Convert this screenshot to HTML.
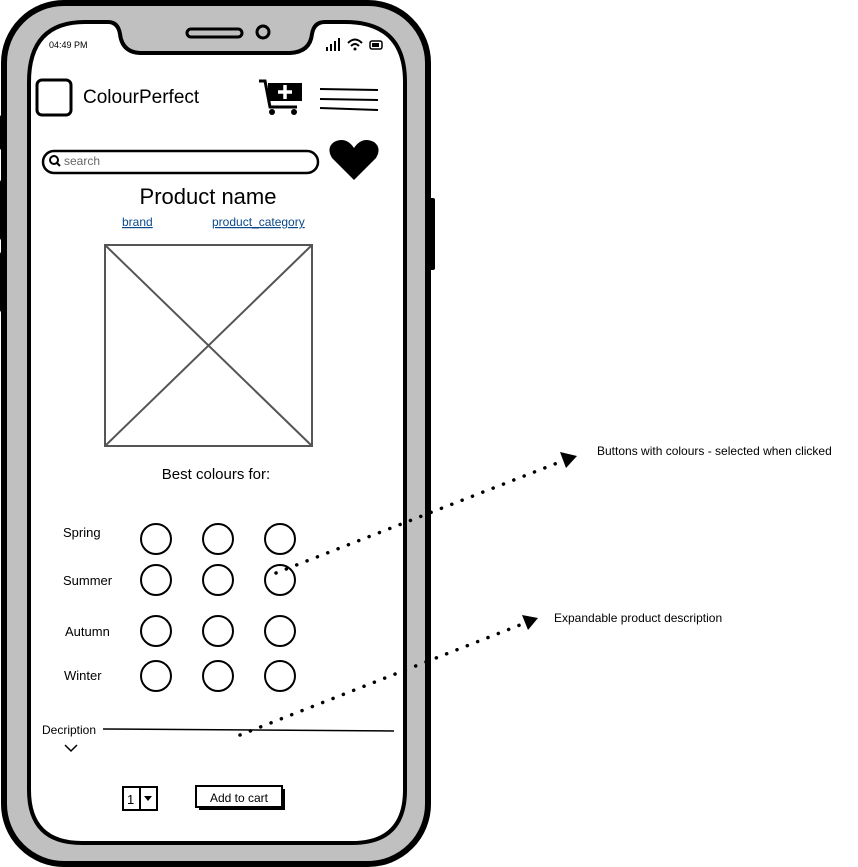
<!DOCTYPE html>
<html><head><style>body{margin:0;background:#fff}svg{display:block}text{font-family:"Liberation Sans",sans-serif}</style></head><body>
<svg width="858" height="867" viewBox="0 0 858 867" xmlns="http://www.w3.org/2000/svg">
<rect x="0" y="115" width="6" height="35" rx="2" fill="#000"/>
<rect x="0" y="180" width="6" height="60" rx="2" fill="#000"/>
<rect x="0" y="252" width="6" height="60" rx="2" fill="#000"/>
<rect x="428" y="198" width="7" height="72" rx="2" fill="#000"/>
<rect x="4" y="3" width="424" height="861" rx="60" fill="#c0c0c0" stroke="#000" stroke-width="6"/>
<path d="M85 22 H108 Q118 22 120 34 Q122 52 140 53 H290 Q310 52 312 34 Q314 22 325 22 H345 Q405 22 405 82 V790 Q405 843 352 843 H82 Q29 843 29 790 V82 Q29 22 85 22 Z" fill="#fff" stroke="#000" stroke-width="4"/>
<rect x="187" y="29" width="55" height="8" rx="4" fill="none" stroke="#000" stroke-width="3"/>
<circle cx="263" cy="32" r="6" fill="none" stroke="#000" stroke-width="3"/>
<text x="49" y="48" font-size="9">04:49 PM</text>
<g fill="#000"><rect x="326" y="47" width="2" height="4"/><rect x="330" y="44" width="2" height="7"/><rect x="334" y="41" width="2" height="10"/><rect x="338" y="38" width="2" height="13"/></g>
<path d="M348 43 Q355 36 362 43 M351 46 Q355 42 359 46" fill="none" stroke="#000" stroke-width="2"/><circle cx="355" cy="49" r="1.5"/>
<rect x="370" y="41" width="12" height="8" rx="2" fill="none" stroke="#000" stroke-width="1.5"/><rect x="372" y="43" width="7" height="4"/>
<rect x="37" y="80" width="34" height="35" rx="5" fill="none" stroke="#000" stroke-width="3"/>
<text x="83" y="103" font-size="19">ColourPerfect</text>
<path d="M259 81 H265 L270 107 H297" fill="none" stroke="#000" stroke-width="3"/>
<rect x="268" y="83" width="34" height="18" fill="#000"/>
<path d="M285 85 V99 M278 92 H292" stroke="#fff" stroke-width="3.5"/>
<circle cx="272" cy="112" r="3"/><circle cx="294" cy="112" r="3"/>
<path d="M320 89 L378 90 M320 99 L378 100 M320 108 L378 110" stroke="#000" stroke-width="2"/>
<rect x="43" y="151" width="275" height="22" rx="11" fill="none" stroke="#000" stroke-width="2.5"/>
<circle cx="54" cy="160" r="4" fill="none" stroke="#000" stroke-width="2"/><path d="M57 163 L60 166" stroke="#000" stroke-width="2"/>
<text x="64" y="165" font-size="12" fill="#666">search</text>
<path d="M354 180 L332 158 Q326 148 334 142 Q346 136 354 148 Q362 136 374 142 Q382 148 376 158 Z" fill="#000"/>
<text x="208" y="204" font-size="22" text-anchor="middle">Product name</text>
<text x="122" y="226" font-size="12" fill="#0a4a8a" text-decoration="underline">brand</text>
<text x="212" y="226" font-size="12" fill="#0a4a8a" text-decoration="underline">product_category</text>
<rect x="105" y="245" width="207" height="201" fill="none" stroke="#555" stroke-width="2"/>
<path d="M105 245 L312 446 M312 245 L105 446" stroke="#555" stroke-width="2"/>
<text x="216" y="479" font-size="15" text-anchor="middle">Best colours for:</text>
<g font-size="13"><text x="63" y="537">Spring</text><text x="63" y="585">Summer</text><text x="65" y="636">Autumn</text><text x="64" y="680">Winter</text></g>
<g fill="none" stroke="#000" stroke-width="2">
<circle cx="156" cy="539" r="15"/><circle cx="218" cy="539" r="15"/><circle cx="280" cy="539" r="15"/>
<circle cx="156" cy="580" r="15"/><circle cx="218" cy="580" r="15"/><circle cx="280" cy="580" r="15"/>
<circle cx="156" cy="631" r="15"/><circle cx="218" cy="631" r="15"/><circle cx="280" cy="631" r="15"/>
<circle cx="156" cy="676" r="15"/><circle cx="218" cy="676" r="15"/><circle cx="280" cy="676" r="15"/>
</g>
<path d="M276 573 L565 460" stroke="#000" stroke-width="3.5" stroke-dasharray="0.1 11" stroke-linecap="round"/>
<path d="M560 452 L577 456 L566 468 Z" fill="#000"/>
<text x="597" y="455" font-size="12">Buttons with colours - selected when clicked</text>
<path d="M240 735 L525 623" stroke="#000" stroke-width="3.5" stroke-dasharray="0.1 11" stroke-linecap="round"/>
<path d="M522 615 L538 618 L528 630 Z" fill="#000"/>
<text x="554" y="622" font-size="12">Expandable product description</text>
<text x="42" y="734" font-size="12">Decription</text>
<path d="M103 729 L394 731" stroke="#000" stroke-width="1.5"/>
<path d="M65 745 L71 751 L77 745" fill="none" stroke="#000" stroke-width="1.5"/>
<rect x="123" y="787" width="34" height="23" fill="none" stroke="#000" stroke-width="2"/>
<path d="M140 787 V810" stroke="#000" stroke-width="2"/>
<text x="127" y="804" font-size="13">1</text>
<path d="M144 796 L152 796 L148 801 Z" fill="#000"/>
<rect x="199" y="789" width="86" height="21" fill="#000"/>
<rect x="196" y="786" width="86" height="21" fill="#fff" stroke="#000" stroke-width="2"/>
<text x="239" y="802" font-size="12" text-anchor="middle">Add to cart</text>
</svg>
</body></html>
